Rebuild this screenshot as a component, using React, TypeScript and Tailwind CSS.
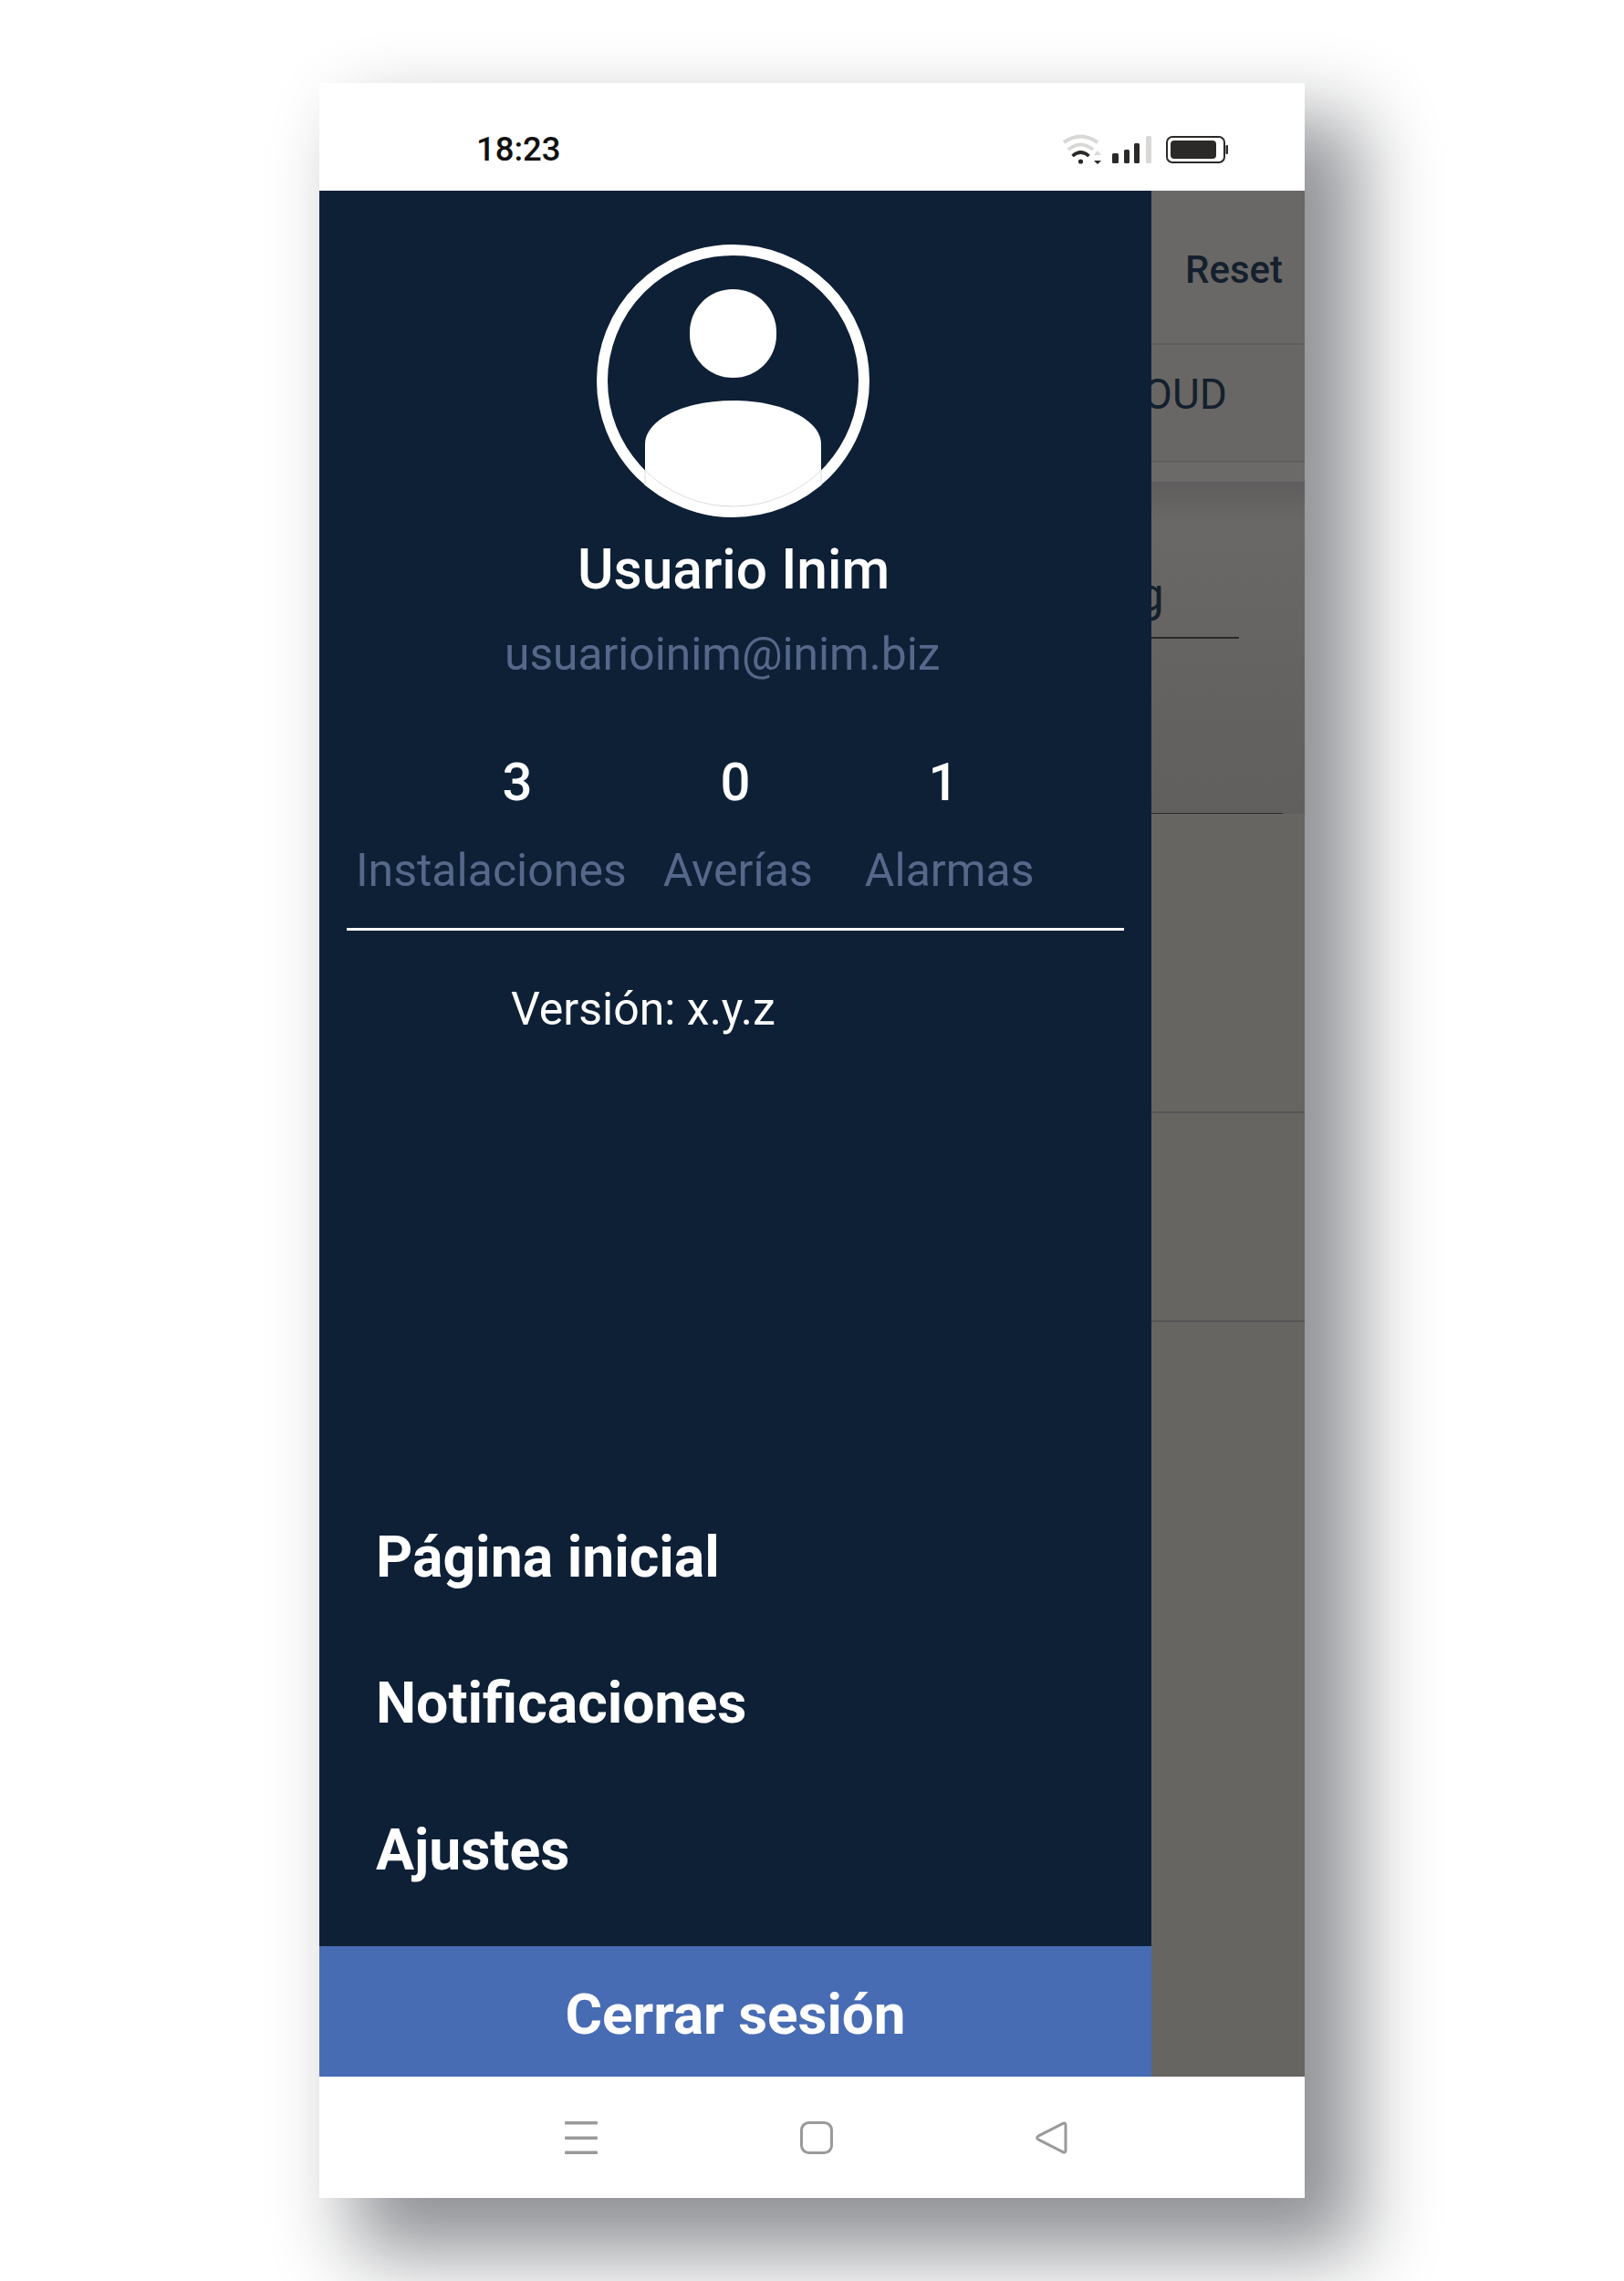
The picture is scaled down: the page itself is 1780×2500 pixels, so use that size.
const STATS = [
  { value: '3', className: 'w-[240px]' },
  { value: '0', className: 'w-[238px]' },
  { value: '1', className: 'w-[218px]' },
];

const LABELS = [
  { label: 'Instalaciones', className: 'ml-[40px]' },
  { label: 'Averías', className: 'ml-[40px]' },
  { label: 'Alarmas', className: 'ml-[57px]' },
];

const MENU = ['Página inicial', 'Notificaciones', 'Ajustes'];

function StatusIcons() {
  return (
    <svg width="190" height="46" viewBox="0 0 190 46" fill="none">
      <path d="M6 15Q24.5 2 43 15" stroke="#d9d8d6" strokeWidth="4" />
      <path d="M11 23Q24.5 12 38 23" stroke="#d9d8d6" strokeWidth="4" />
      <path d="M15.5 30Q24.5 22 33.5 30" stroke="#2b2a29" strokeWidth="3.6" />
      <circle cx="24.5" cy="36" r="2.6" fill="#2b2a29" />
      <polygon points="39,29 47,29 43,24" fill="#d9d8d6" />
      <polygon points="39,35 47,35 43,39" fill="#2b2a29" />
      <rect x="59" y="27" width="7" height="11" rx="1.5" fill="#2b2a29" />
      <rect x="72" y="23" width="6" height="15" rx="1.5" fill="#2b2a29" />
      <rect x="83" y="16" width="6" height="22" rx="1.5" fill="#2b2a29" />
      <rect x="96" y="8" width="6" height="30" rx="1.5" fill="#d9d8d6" />
      <rect x="119" y="9" width="63" height="28" rx="6" stroke="#2b2a29" strokeWidth="2" />
      <rect x="123" y="13" width="50" height="20" rx="4" fill="#2b2a29" />
      <rect x="183.5" y="18" width="2.5" height="10" rx="1" fill="#2b2a29" />
    </svg>
  );
}

function Avatar() {
  return (
    <svg width="299" height="299" viewBox="0 0 299 299" className="ml-[304px] block">
      <path
        d="M53 264V219C53 192 96 171 149.5 171C203 171 246 192 246 219V264C220 277 185 287 149.5 287C114 287 79 277 53 264Z"
        fill="#fff"
      />
      <rect x="102" y="49" width="95" height="97" rx="47" fill="#fff" />
      <circle cx="149.5" cy="149.5" r="143.5" fill="none" stroke="#fff" strokeWidth="12" />
      <path d="M53 247.5A137.5 137.5 0 0 0 246 247.5" fill="none" stroke="#d4d4d4" strokeWidth="0.8" />
      <path d="M53 247.5V264M246 247.5V264" fill="none" stroke="#d4d4d4" strokeWidth="0.8" />
    </svg>
  );
}

function Drawer() {
  return (
    <div className="w-[912px] flex flex-col bg-[#0e2036] pt-[59px]">
      <Avatar />
      <div className="mt-[23px] pl-[283px] text-[60.5px] leading-[70px] font-medium text-white whitespace-nowrap">
        Usuario Inim
      </div>
      <div className="mt-[27px] pl-[203px] text-[49.7px] leading-[60px] text-[#56688a] whitespace-nowrap">
        usuarioinim@inim.biz
      </div>
      <div className="mt-[75px] pl-[97px] flex text-[58px] leading-[70px] font-medium text-white">
        {STATS.map((s) => (
          <div key={s.value} className={`text-center ${s.className}`}>
            {s.value}
          </div>
        ))}
      </div>
      <div className="mt-[32px] flex text-[50px] leading-[60px] text-[#56688a] whitespace-nowrap">
        {LABELS.map((l) => (
          <div key={l.label} className={l.className}>
            {l.label}
          </div>
        ))}
      </div>
      <div className="mt-[33px] mx-[30px] h-[3px] bg-white" />
      <div className="mt-[56px] pl-[210px] text-[50px] leading-[60px] text-white">Versión: x.y.z</div>
      <div className="flex-1" />
      <div className="pb-[25px]">
        {MENU.map((item) => (
          <div
            key={item}
            className="h-[160.5px] flex items-center pl-[62px] text-[62.5px] font-bold text-white whitespace-nowrap"
          >
            {item}
          </div>
        ))}
      </div>
      <div className="h-[143px] flex items-center justify-center pt-[5px] bg-[#486cb3] text-[62px] font-bold text-white">
        Cerrar sesión
      </div>
    </div>
  );
}

function Backdrop() {
  return (
    <div className="flex-1 min-w-0 flex flex-col overflow-hidden bg-[#676562] text-[#14202d] whitespace-nowrap">
      <div className="h-[169px] shrink-0 flex items-center justify-end pt-[6px] pr-[24px] bg-[#6a6866] border-b-2 border-[#605e5d] text-[42px] font-medium">
        Reset
      </div>
      <div className="h-[129px] shrink-0 flex items-center justify-end pb-[19px] pr-[85px] bg-[#696765] border-b-2 border-[#605e5d] text-[46px]">
        OUD
      </div>
      <div className="h-[21px] shrink-0 bg-[#6c6a68]" />
      <div className="h-[364px] shrink-0 flex flex-col bg-[linear-gradient(#5f5d5d,#6a6866_12%,#605f5d)]">
        <div className="h-[172px] flex items-end justify-end pb-[16px] pr-[82px] mr-[72px] border-b-2 border-[#2b2a2a] text-[52px] leading-[60px]">
          g
        </div>
        <div className="h-[192px] mr-[24px] border-b border-[#2b2a2a]" />
      </div>
      <div className="h-[328px] shrink-0 border-b-2 border-[#565456]" />
      <div className="h-[229px] shrink-0 border-b-2 border-[#565456]" />
    </div>
  );
}

function NavBar() {
  return (
    <div className="h-[133px] flex items-center pl-[269px] gap-[222px] bg-white">
      <svg width="36" height="36" viewBox="0 0 36 36" fill="#9a9a9a">
        <rect x="0" y="0" width="36" height="3.5" rx="1" />
        <rect x="0" y="16.5" width="36" height="3.5" rx="1" />
        <rect x="0" y="32.5" width="36" height="3.5" rx="1" />
      </svg>
      <svg width="36" height="36" viewBox="0 0 36 36" fill="none">
        <rect x="1.5" y="1.5" width="33" height="33" rx="8" stroke="#9a9a9a" strokeWidth="3" />
      </svg>
      <svg width="36" height="36" viewBox="0 0 36 36" fill="none">
        <path
          d="M33 4C33 2.2 31.5 1.4 30 2.3L3 16.2C1.2 17.2 1.2 18.8 3 19.8L30 33.7C31.5 34.6 33 33.8 33 32Z"
          stroke="#9a9a9a"
          strokeWidth="3"
          strokeLinejoin="round"
        />
      </svg>
    </div>
  );
}

export default function App() {
  return (
    <div className="h-[2500px] overflow-hidden bg-white pt-[91px] pl-[350px] font-['Roboto',sans-serif]">
      <div className="w-[1080px] h-[2318px] flex flex-col shadow-[48px_50px_80px_10px_rgba(10,15,25,0.46)]">
        <div className="h-[118px] flex items-center justify-between bg-white pt-[28px] pl-[172px] pr-[80px]">
          <span className="text-[36.5px] font-medium text-[#111]">18:23</span>
          <StatusIcons />
        </div>
        <div className="flex-1 min-h-0 flex">
          <Drawer />
          <Backdrop />
        </div>
        <NavBar />
      </div>
    </div>
  );
}
